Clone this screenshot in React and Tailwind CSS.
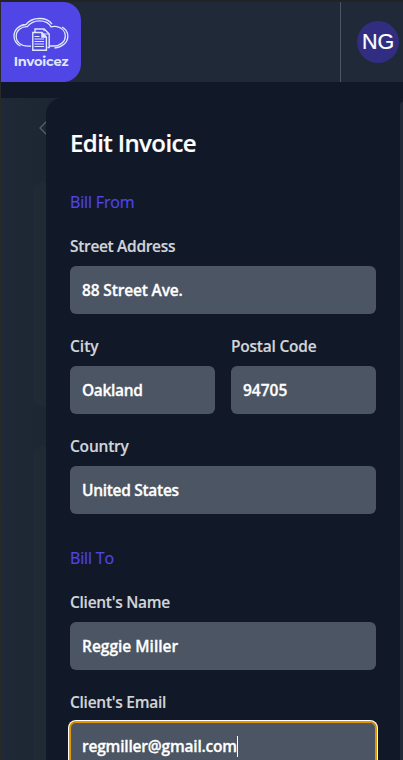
import React from "react";

function Logo() {
  return (
    <div className="flex h-20 w-20 shrink-0 flex-col items-center rounded-r-[18px] bg-[#4f46e5] pt-[15px] text-[#e0e7ff]">
      <svg width="56" height="36" viewBox="0 0 56 36" fill="none" stroke="currentColor">
        <path d="M7.5 29C3.6 27 1 23.3 1 19C1 12.6 6.3 7.8 13 7.5C16 3.7 21 1.5 26.5 1.5C32 1.5 36.5 3.6 39 7.2" strokeWidth="1.3" />
        <path d="M18 29.2H15C8 29.2 3.2 25 3.2 19.2C3.2 13.5 8 9.5 14.3 9.7C17.2 5.8 21.4 3.8 26.5 3.8C32.6 3.8 36.4 6.6 38.1 9.9C40 9.3 42 9.2 44 9.7C49 10.8 52.3 14.6 52.3 19.2C52.3 24.5 47.5 29 41 29H37" strokeWidth="1.3" />
        <path d="M49 10.2C52.6 12 54.8 15.3 54.8 19.2C54.8 25.6 49 30.5 41.5 31" strokeWidth="1.3" />
        <path d="M22 15.2V12H31.2L36.2 17V30.5H34.5" strokeWidth="1.4" />
        <path d="M31 12V14.2M31 17H36" strokeWidth="1" />
        <path d="M19.8 15.5H29L33.4 20V33.3H19.8Z" strokeWidth="1.4" fill="#4f46e5" />
        <path d="M28.5 15.5L33.4 20.5H28.5Z" fill="currentColor" strokeWidth="0.6" />
        <path d="M21.5 19.5H26.5M21.5 22H31M21.5 24.5H31M21.5 27H31M21.5 29.5H31" strokeWidth="1.1" />
      </svg>
      <span className="-mt-px font-['Montserrat','Inter',sans-serif] text-[13px] leading-[18px] font-bold tracking-[-0.15px]">Invoicez</span>
    </div>
  );
}

function Field({ label, labelClass = "", value, valueClass = "", focused = false }) {
  return (
    <label className="block min-w-0 flex-1">
      <span className={`block h-6 text-[15.5px] leading-6 font-semibold whitespace-nowrap text-[#d1d5db] [-webkit-text-stroke:0.15px_#d1d5db] ${labelClass}`}>{label}</span>
      <span
        className={`mt-2 flex h-12 items-center rounded-md bg-[#4b5563] px-3 font-semibold whitespace-nowrap text-white ${
          focused ? "shadow-[0_0_0_1px_#e59700,0_0_0_2px_#ffffff,inset_0_0_0_1px_#e59700]" : ""
        }`}
      >
        <span className={`text-[15.5px] leading-6 [-webkit-text-stroke:0.3px_white] ${valueClass}`}>{value}</span>
        {focused && <span className="h-[21px] w-px bg-white" />}
      </span>
    </label>
  );
}

function SectionTitle({ children, className = "" }) {
  return <h2 className={`h-6 text-base leading-6 font-medium tracking-[-0.15px] text-[#4f46e5] [-webkit-text-stroke:0.2px_#4f46e5] ${className}`}>{children}</h2>;
}

export default function App() {
  return (
    <div className="h-[760px] w-[403px] overflow-hidden border-t-2 border-l border-t-[#232323] border-l-[#292929] bg-[#111827] font-['Open_Sans',sans-serif]">
      <header className="flex h-20 bg-[#1f2937]">
        <Logo />
        <div className="ml-auto flex w-[63px] items-center border-l border-[#4b5563] pl-4">
          <div className="flex h-[42px] w-[42px] shrink-0 items-center justify-center rounded-full bg-[#312e81] pt-px font-['Liberation_Sans',sans-serif] text-[21.5px] leading-none text-white [-webkit-text-stroke:0.2px_white]">NG</div>
        </div>
      </header>

      <main className="mt-4 flex h-[662px] bg-[linear-gradient(90deg,#1f2937_0px,#1c2732_45px,#1c2732_100%)]">
        <div className="flex w-[45px] shrink-0 flex-col items-end overflow-hidden">
          <svg className="mt-[23px] h-[14px] w-[7px] shrink-0" viewBox="0 0 7 14" fill="none" stroke="#555f6b" strokeWidth="1.3">
            <path d="M7.5 0.5L1 7L7.5 13.5" />
          </svg>
          <div className="mt-[47px] h-56 w-[13px] shrink-0 rounded-l-lg bg-[#1f2a34]" />
          <div className="mt-10 h-[400px] w-[13px] shrink-0 rounded-l-lg bg-[#1f2a34]" />
        </div>

        <section className="w-[354px] shrink-0 rounded-tl-2xl bg-[#111827] px-6 pt-[29px]">
          <h1 className="h-8 text-2xl leading-8 font-semibold tracking-[-0.6px] text-white [-webkit-text-stroke:0.2px_white]">Edit Invoice</h1>
          <SectionTitle className="mt-[31px]">Bill From</SectionTitle>
          <div className="mt-5 flex flex-col gap-5">
            <Field label="Street Address" labelClass="tracking-[-0.32px]" value="88 Street Ave." valueClass="tracking-[-0.15px]" />
            <div className="flex gap-4">
              <Field label="City" value="Oakland" valueClass="tracking-[-0.33px]" />
              <Field label="Postal Code" labelClass="tracking-[-0.22px]" value="94705" />
            </div>
            <Field label="Country" labelClass="tracking-[-0.2px]" value="United States" valueClass="tracking-[-0.3px]" />
          </div>
          <SectionTitle className="mt-8">Bill To</SectionTitle>
          <div className="mt-5 flex flex-col gap-5">
            <Field label="Client's Name" labelClass="tracking-[-0.28px]" value="Reggie Miller" />
            <Field label="Client's Email" labelClass="tracking-[-0.27px]" value="regmiller@gmail.com" valueClass="tracking-[-0.2px]" focused />
          </div>
        </section>
        <div className="flex flex-1 flex-col bg-[#111827] pt-1">
          <div className="flex-1 rounded-tl-[3px] bg-[#1f2937]" />
        </div>
      </main>
    </div>
  );
}
